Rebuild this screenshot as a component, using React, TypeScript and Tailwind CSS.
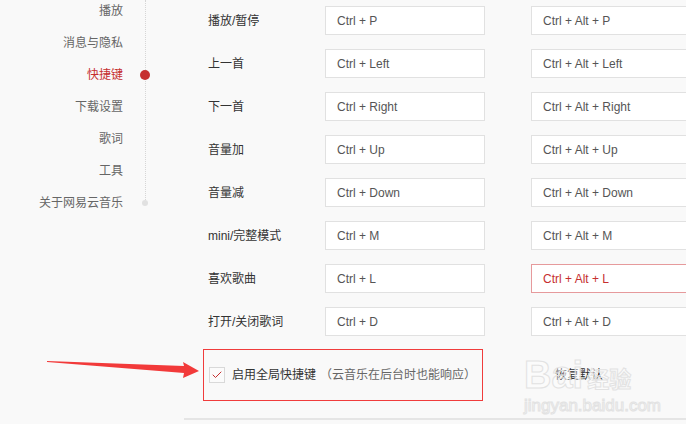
import { Check } from 'lucide-react';

const navItems = ['播放', '消息与隐私', '快捷键', '下载设置', '歌词', '工具', '关于网易云音乐'];

const shortcuts = [
  { label: '播放/暂停', local: 'Ctrl + P', global: 'Ctrl + Alt + P' },
  { label: '上一首', local: 'Ctrl + Left', global: 'Ctrl + Alt + Left' },
  { label: '下一首', local: 'Ctrl + Right', global: 'Ctrl + Alt + Right' },
  { label: '音量加', local: 'Ctrl + Up', global: 'Ctrl + Alt + Up' },
  { label: '音量减', local: 'Ctrl + Down', global: 'Ctrl + Alt + Down' },
  { label: 'mini/完整模式', local: 'Ctrl + M', global: 'Ctrl + Alt + M' },
  { label: '喜欢歌曲', local: 'Ctrl + L', global: 'Ctrl + Alt + L', active: true },
  { label: '打开/关闭歌词', local: 'Ctrl + D', global: 'Ctrl + Alt + D' },
];

const font = "font-['Microsoft_YaHei','Liberation_Sans','Noto_Sans_CJK_SC',sans-serif]";

const KeyBox = ({ value, active }: { value: string; active?: boolean }) => (
  <div
    className={
      active
        ? 'h-[29px] flex items-center pt-px px-[11px] bg-white border border-[#e69a9c] text-[#c62f2f]'
        : 'h-[29px] flex items-center pt-px px-[11px] bg-white border border-[#e1e1e1] text-[#555]'
    }
  >
    {value}
  </div>
);

const App = () => {
  return (
    <div className={`relative w-[686px] h-[424px] overflow-hidden bg-[#f9f9f9] flex text-[12px] ${font}`}>
      {/* side nav */}
      <div className="relative w-[184px] shrink-0">
        <div className="absolute left-[145px] top-0 h-[202px] border-l border-dotted border-[#d6d6d6]" />
        <div className="-mt-[5px] flex flex-col">
          {navItems.map((item, i) => (
            <div key={item} className="h-8 flex items-center">
              <span
                className={
                  i === 2 ? 'w-[123px] text-right text-[#c62f2f]' : 'w-[123px] text-right text-[#666]'
                }
              >
                {item}
              </span>
              <div className="w-[44px] flex justify-center relative">
                {i === 2 && <div className="w-[10px] h-[10px] rounded-full bg-[#c62f2f]" />}
                {i === navItems.length - 1 && <div className="w-[6px] h-[6px] rounded-full bg-[#e1e1e1]" />}
              </div>
            </div>
          ))}
        </div>
      </div>

      {/* content */}
      <div className="flex-1 pt-[6px] flex flex-col">
        <div className="pl-[24px] flex flex-col gap-[14px]">
          {shortcuts.map((s) => (
            <div key={s.label} className="flex items-center">
              <span className="w-[117px] pt-px text-[#333]">{s.label}</span>
              <div className="w-[160px]">
                <KeyBox value={s.local} />
              </div>
              <div className="ml-[46px] w-[200px] shrink-0">
                <KeyBox value={s.global} active={s.active} />
              </div>
            </div>
          ))}
        </div>

        <div className="mt-[13px] pl-[19px] flex items-center">
          <div className="w-[280px] h-[52px] border-[1.5px] border-[#f03c3c] flex items-center pl-[5px]">
            <div className="w-4 h-4 border border-[#d9d9d9] bg-[#fbfbfb] flex items-center justify-center">
              <Check size={12} strokeWidth={2} className="text-[#c62f2f]" />
            </div>
            <span className="ml-[7px] text-[#333]">启用全局快捷键</span>
            <span className="ml-[4px] text-[#666]">（云音乐在后台时也能响应）</span>
          </div>
          <span className="ml-[72px] text-[#333]">恢复默认</span>
        </div>

        <div className="mt-[17px] h-[2px] bg-[#e5e5e5]" />
      </div>

      {/* annotation arrow */}
      <svg className="absolute left-0 top-0 pointer-events-none" width="686" height="424">
        <polygon points="47,361 184,366 183,362 199,371 183,378 184,373 47,362" fill="#f23a3a" />
      </svg>

      {/* watermark */}
      <div className="absolute left-[524px] top-[356px] pointer-events-none flex flex-col items-start">
        <div className="flex items-end leading-none">
          <span className="text-[38px] font-bold text-white/40 [-webkit-text-stroke:1px_#e2e2e2] font-['Liberation_Sans',sans-serif]">
            Bai
          </span>
          <span className="ml-[4px] mb-[3px] text-[22px] font-bold text-white/40 [-webkit-text-stroke:1px_#e2e2e2]">
            经验
          </span>
        </div>
        <span className="mt-[3px] text-[17px] leading-none text-white/40 [-webkit-text-stroke:1px_#e2e2e2] font-['Liberation_Sans',sans-serif]">
          jingyan.baidu.com
        </span>
      </div>
    </div>
  );
};

export default App;
